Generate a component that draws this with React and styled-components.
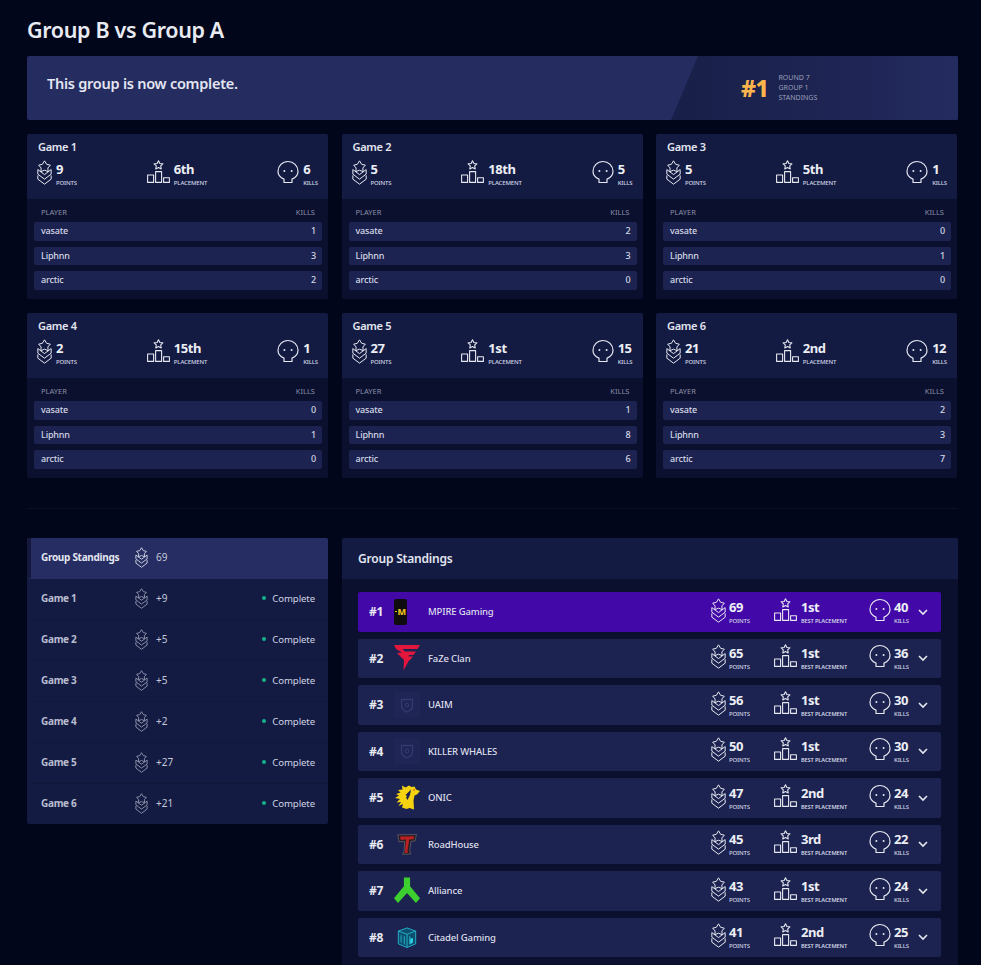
import React from 'react';
import styled, { createGlobalStyle } from 'styled-components';

const Global = createGlobalStyle`
  html, body { margin: 0; padding: 0; background: #02061a; }
  body { font-family: "Noto Sans", "Open Sans", sans-serif; color: #e8eaf2; height: 965px; overflow: hidden; }
  * { box-sizing: border-box; }
`;

const Page = styled.div`
  width: 981px;
  height: 965px;
  overflow: hidden;
  padding: 15px 23px 0 27px;
`;
const Title = styled.h1`
  margin: 0 0 12px;
  font-size: 21.5px;
  line-height: 29px;
  font-weight: 600;
  letter-spacing: -0.35px;
  color: #e9ebf2;
`;
const Banner = styled.section`
  display: flex;
  justify-content: space-between;
  height: 64px;
  background: #252c60;
  border-radius: 2px;
  margin-bottom: 14px;
  overflow: hidden;
`;
const BannerText = styled.div`
  padding: 16px 0 0 20px;
  font-size: 14.5px;
  line-height: 22px;
  font-weight: 600;
  letter-spacing: -0.25px;
  color: #e3e6f0;
`;
const BannerSide = styled.div`
  width: 287px;
  display: flex;
  align-items: center;
  gap: 10px;
  padding-left: 70px;
  background: linear-gradient(90deg, #182049 0%, #1d2452 50%, #242b5f 100%);
  clip-path: polygon(27px 0, 100% 0, 100% 100%, 0 100%);
`;
const Rank = styled.div`
  font-size: 23px;
  font-weight: 800;
  letter-spacing: -0.4px;
  color: #fbb44c;
  line-height: 1;
`;
const BannerLabels = styled.div`
  font-size: 7px;
  line-height: 10px;
  color: #9a9fb8;
  text-transform: uppercase;
`;
const CardGrid = styled.div`
  display: grid;
  grid-template-columns: repeat(3, 301px);
  gap: 14px 13.5px;
`;
const Card = styled.article`
  height: 165px;
  background: #0a102e;
  border-radius: 2px;
  overflow: hidden;
`;
const CardHead = styled.div`
  height: 65px;
  padding: 5px 10px 0 10px;
  background: #141b43;
`;
const CardTitle = styled.div`
  font-size: 11px;
  line-height: 15px;
  font-weight: 600;
  letter-spacing: -0.3px;
  padding-left: 1px;
  color: #e3e6f0;
  margin-bottom: 6px;
`;
const Stats = styled.div`
  display: flex;
  justify-content: space-between;
  align-items: flex-start;
`;
const Stat = styled.div`
  display: flex;
  align-items: flex-start;
  gap: ${p => p.$gap || 4}px;
`;
const StatText = styled.div`
  display: flex;
  flex-direction: column;
  padding-top: 1px;
`;
const StatValue = styled.div`
  font-size: 13px;
  line-height: 16px;
  font-weight: 700;
  letter-spacing: -0.45px;
  color: #eceef5;
`;
const StatLabel = styled.div`
  margin-top: 1px;
  font-size: ${p => p.$bold ? 5.7 : 6}px;
  line-height: 10px;
  letter-spacing: -0.15px;
  font-weight: ${p => p.$bold ? 600 : 500};
  color: #d0d4e4;
  text-transform: uppercase;
`;
const PlayerHead = styled.div`
  display: flex;
  justify-content: space-between;
  padding: 7px 13px 0 14px;
  height: 24px;
  font-size: 7.5px;
  line-height: 12px;
  color: #8a8fa8;
  text-transform: uppercase;
`;
const PlayerList = styled.div`
  display: flex;
  flex-direction: column;
  gap: 6px;
  padding: 0 6px 0 7px;
  margin-top: -1px;
`;
const PlayerRow = styled.div`
  height: 18.5px;
  display: flex;
  justify-content: space-between;
  align-items: center;
  padding: 0 6px 1px 7px;
  background: #1c2350;
  border-radius: 2px;
  font-size: 9px;
  font-weight: 500;
  letter-spacing: -0.15px;
  color: #d5d8e6;
`;
const Divider = styled.hr`
  margin: 30px 0 29px;
  border: 0;
  height: 1px;
  background: #0a102a;
`;
const Lower = styled.div`
  display: grid;
  grid-template-columns: 301px 616px;
  gap: 14px;
  align-items: start;
`;
const SidePanel = styled.nav`
  background: #141b43;
  border-radius: 2px;
  overflow: hidden;
`;
const SideRow = styled.div`
  height: 41px;
  display: grid;
  grid-template-columns: 94px 21px 1fr auto;
  align-items: center;
  padding: 0 13px 2px ${p => p.$active ? 10 : 14}px;
  background: ${p => p.$active ? '#262d62' : 'transparent'};
  border-left: ${p => p.$active ? '4px solid #15183a' : '0'};
  border-bottom: 1px solid ${p => p.$active ? '#262d62' : '#121839'};
  &:last-child { height: 40px; border-bottom: 0; }
`;
const SideName = styled.div`
  font-size: 10px;
  font-weight: 700;
  letter-spacing: -0.3px;
  color: ${p => p.$active ? '#e3e6f0' : '#b9bdd0'};
`;
const SideValue = styled.div`
  font-size: 10px;
  color: #c5c9da;
`;
const SideStatus = styled.div`
  display: flex;
  align-items: center;
  gap: 6px;
  font-size: 9.6px;
  letter-spacing: -0.1px;
  color: #cfd3e2;
  &::before {
    content: '';
    width: 4px;
    height: 4px;
    border-radius: 50%;
    background: #14b48a;
  }
`;
const MainPanel = styled.section`
  height: 440px;
  background: #0a102e;
  border-radius: 2px;
  overflow: hidden;
`;
const MainHead = styled.div`
  height: 41px;
  padding: 0 16px 1px;
  display: flex;
  align-items: center;
  background: #141b43;
  font-size: 12px;
  font-weight: 600;
  letter-spacing: -0.2px;
  color: #e3e6f0;
`;
const TeamList = styled.div`
  display: flex;
  flex-direction: column;
  gap: 7px;
  padding: 13px 17px 0 16px;
`;
const TeamRow = styled.div`
  height: 39.5px;
  display: flex;
  align-items: center;
  padding-left: 11px;
  background: ${p => p.$first ? '#4208a8' : '#1c2350'};
  border-radius: 2px;
`;
const TeamRank = styled.div`
  width: 25px;
  font-size: 12px;
  font-weight: 700;
  letter-spacing: -0.2px;
  color: #e8eaf2;
`;
const LogoSlot = styled.div`
  width: 26px;
  height: 26px;
  margin-right: 8px;
  display: flex;
  align-items: center;
  justify-content: center;
`;
const MpireMark = styled.div`
  width: 13px;
  height: 26px;
  margin-right: 13px;
  display: flex;
  align-items: center;
  justify-content: center;
  background: #0e0c0e;
  border-radius: 2px;
  font-size: 9px;
  font-weight: 800;
  letter-spacing: -0.5px;
  color: #e8bf22;
  &::before {
    content: '';
    width: 2px;
    height: 1px;
    background: #e8bf22;
  }
`;
const TeamName = styled.div`
  flex: 1;
  font-size: 9.5px;
  font-weight: 500;
  letter-spacing: -0.15px;
  color: #dcdfeb;
`;
const TeamStat = styled.div`
  width: ${p => p.$w}px;
  display: flex;
  align-items: flex-start;
  gap: ${p => p.$gap || 3}px;
`;
const Chevron = styled.svg`
  width: 12px;
  height: 12px;
  margin-right: 12px;
  fill: none;
  stroke: #e6e8f0;
  stroke-width: 1.6;
`;

const PointsIcon = ({ color = '#e6e8f0', w = 15, h = 25, sw = 1.2 }) => (
  <svg width={w} height={h} viewBox="0 0 18 30" fill="none" stroke={color} strokeWidth={sw} strokeLinejoin="round">
    <path d="M9 1l2.600 4.200 4.400 1-3 3.400.4 4.400L9 12.200 4.600 14l.4-4.400-3-3.400 4.400-1z" />
    <path d="M1 11.500v5.500l8 6 8-6v-5.500l-8 6z" />
    <path d="M1 18.500v4.500l8 6 8-6v-4.500" />
  </svg>
);
const PlaceIcon = () => (
  <svg width="23" height="23" viewBox="0 0 23 23" fill="none" stroke="#e6e8f0" strokeWidth="1.1" strokeLinejoin="round">
    <path d="M11.500 .8l1.400 2.700 3 .4-2.200 2 .5 3-2.700-1.400-2.700 1.400.5-3-2.200-2 3-.4z" />
    <rect x=".6" y="15" width="6" height="7.400" />
    <rect x="8.600" y="11.600" width="6" height="10.800" />
    <rect x="16.600" y="17.800" width="5.800" height="4.600" />
  </svg>
);
const SkullIcon = () => (
  <svg width="22" height="24" viewBox="0 0 22 24" fill="none" stroke="#e6e8f0" strokeWidth="1.2" strokeLinejoin="round">
    <path d="M7 22.500v-3.400C3.300 17.700 1 14.800 1 11.300 1 6 5.400 1.500 11 1.500S21 6 21 11.300c0 3.500-2.300 6.400-6 7.800v3.400z" />
    <circle cx="7.400" cy="11" r="1" fill="#e6e8f0" stroke="none" />
    <circle cx="14.600" cy="11" r="1" fill="#e6e8f0" stroke="none" />
  </svg>
);

const FazeLogo = () => (
  <svg width="26" height="26" viewBox="0 0 26 26">
    <path fill="#e3173e" d="M0 0h26l-2.500 4H8.500l2.500 2.500H22l-2.500 3.500H15l-.5 1.500H19l-3 3.500-1 .5-5.500 10L10 15 3 8l5-.5L2 4z" />
  </svg>
);
const PlainLogo = () => (
  <svg width="26" height="26" viewBox="0 0 26 26">
    <rect width="26" height="26" fill="#1f2655" />
    <path fill="none" stroke="#333b72" strokeWidth="1.300" d="M7.500 7.500h11V14c0 3-2.500 4.700-5.500 6-3-1.300-5.500-3-5.500-6z" />
    <circle cx="13" cy="13" r="1.800" fill="none" stroke="#333b72" />
  </svg>
);
const OnicLogo = () => (
  <svg width="26" height="25" viewBox="0 0 26 25">
    <path fill="#f5d20f" d="M8 .5l3.500 2L15 .5l2.500 1.500 3-.5 1.500 3 4 1.500-3 3.500-2.500 1-1 5 .5 9-4.500-1.500-3 1-4.500-1.500 1-3.500-4.500 2 2.500-4-4.500.5 3.500-3.500L1 13l4-2.500-3-1.500 4.500-1.500L4 5l4.500-.5z" />
    <path fill="#1c2350" d="M11.500 10L17 4.500l-1 5.500-2.500 5-1.500-2.500 1-1.500z" />
    <circle cx="20" cy="5" r=".8" fill="#d84018" />
  </svg>
);
const RoadhouseLogo = () => (
  <svg width="20" height="21" viewBox="0 0 20 21">
    <path fill="#2a1c22" stroke="#6b6a72" strokeWidth=".7" d="M.7 .8L19.500 .4 18 7l-4 .3-1.300 9 1 3.700-8 .4 1.500-4L7.500 7.500 2 7.700z" />
    <path fill="#bb2121" d="M3 2.500l14.200-.3-.8 3-4.200.3-1.800 12 .8 1.300-3.700.2.500-1.500L9 5.600l-5.300.3z" />
  </svg>
);
const AllianceLogo = () => (
  <svg width="27" height="27" viewBox="0 0 27 27">
    <path fill="#3ccf2f" d="M10.300 0h6.400v9L27 21.500 22.800 26.500 13.500 16.200 4.200 26.500 0 21.500 10.300 9z" />
  </svg>
);
const CitadelLogo = () => (
  <svg width="20" height="21" viewBox="0 0 21 23" fill="none" stroke="#25b5cf" strokeWidth="1">
    <path d="M10.500 1L20 4.500v14l-9.500 4L1 18.500v-14z" fill="#0d4f6e" />
    <path d="M1 4.500l9.500 3.500L20 4.500M10.500 8v14" />
    <path d="M4 9v8M7.500 10v9M13.500 10v9" />
    <path fill="#2fd3e6" stroke="none" d="M14 13l3-1v5l-3 2z" />
  </svg>
);

const games = [
  { n: 1, p: 9, pl: '6th', k: 6, r: [1, 3, 2] },
  { n: 2, p: 5, pl: '18th', k: 5, r: [2, 3, 0] },
  { n: 3, p: 5, pl: '5th', k: 1, r: [0, 1, 0] },
  { n: 4, p: 2, pl: '15th', k: 1, r: [0, 1, 0] },
  { n: 5, p: 27, pl: '1st', k: 15, r: [1, 8, 6] },
  { n: 6, p: 21, pl: '2nd', k: 12, r: [2, 3, 7] },
];
const players = ['vasate', 'Liphnn', 'arctic'];
const teams = [
  { name: 'MPIRE Gaming', logo: <MpireMark>M</MpireMark>, p: 69, b: '1st', k: 40 },
  { name: 'FaZe Clan', logo: <FazeLogo />, p: 65, b: '1st', k: 36 },
  { name: 'UAIM', logo: <PlainLogo />, p: 56, b: '1st', k: 30 },
  { name: 'KILLER WHALES', logo: <PlainLogo />, p: 50, b: '1st', k: 30 },
  { name: 'ONIC', logo: <OnicLogo />, p: 47, b: '2nd', k: 24 },
  { name: 'RoadHouse', logo: <RoadhouseLogo />, p: 45, b: '3rd', k: 22 },
  { name: 'Alliance', logo: <AllianceLogo />, p: 43, b: '1st', k: 24 },
  { name: 'Citadel Gaming', logo: <CitadelLogo />, p: 41, b: '2nd', k: 25 },
];

export default function App() {
  return (
    <Page>
      <Global />
      <Title>Group B vs Group A</Title>
      <Banner>
        <BannerText>This group is now complete.</BannerText>
        <BannerSide>
          <Rank>#1</Rank>
          <BannerLabels>Round 7<br />Group 1<br />Standings</BannerLabels>
        </BannerSide>
      </Banner>
      <CardGrid>
        {games.map(g => (
          <Card key={g.n}>
            <CardHead>
              <CardTitle>Game {g.n}</CardTitle>
              <Stats>
                <Stat>
                  <PointsIcon />
                  <StatText><StatValue>{g.p}</StatValue><StatLabel>Points</StatLabel></StatText>
                </Stat>
                <Stat>
                  <PlaceIcon />
                  <StatText><StatValue>{g.pl}</StatValue><StatLabel>Placement</StatLabel></StatText>
                </Stat>
                <Stat>
                  <SkullIcon />
                  <StatText><StatValue>{g.k}</StatValue><StatLabel>Kills</StatLabel></StatText>
                </Stat>
              </Stats>
            </CardHead>
            <PlayerHead><span>Player</span><span>Kills</span></PlayerHead>
            <PlayerList>
              {players.map((name, i) => (
                <PlayerRow key={name}><span>{name}</span><span>{g.r[i]}</span></PlayerRow>
              ))}
            </PlayerList>
          </Card>
        ))}
      </CardGrid>
      <Divider />
      <Lower>
        <SidePanel>
          <SideRow $active>
            <SideName $active>Group Standings</SideName>
            <PointsIcon color="#d5d8e6" w={13} h={21} sw={1.3} />
            <SideValue>69</SideValue>
          </SideRow>
          {games.map(g => (
            <SideRow key={g.n}>
              <SideName>Game {g.n}</SideName>
              <PointsIcon color="#9297ad" w={13} h={21} sw={1.3} />
              <SideValue>+{g.p}</SideValue>
              <SideStatus>Complete</SideStatus>
            </SideRow>
          ))}
        </SidePanel>
        <MainPanel>
          <MainHead>Group Standings</MainHead>
          <TeamList>
            {teams.map((t, i) => (
              <TeamRow key={t.name} $first={i === 0}>
                <TeamRank>#{i + 1}</TeamRank>
                <LogoSlot>{t.logo}</LogoSlot>
                <TeamName>{t.name}</TeamName>
                <TeamStat $w={63}>
                  <PointsIcon />
                  <StatText><StatValue>{t.p}</StatValue><StatLabel>Points</StatLabel></StatText>
                </TeamStat>
                <TeamStat $w={95} $gap={4}>
                  <PlaceIcon />
                  <StatText><StatValue>{t.b}</StatValue><StatLabel $bold>Best Placement</StatLabel></StatText>
                </TeamStat>
                <TeamStat $w={48}>
                  <SkullIcon />
                  <StatText><StatValue>{t.k}</StatValue><StatLabel>Kills</StatLabel></StatText>
                </TeamStat>
                <Chevron viewBox="0 0 12 12"><path d="M2 4l4 4 4-4" /></Chevron>
              </TeamRow>
            ))}
          </TeamList>
        </MainPanel>
      </Lower>
    </Page>
  );
}
